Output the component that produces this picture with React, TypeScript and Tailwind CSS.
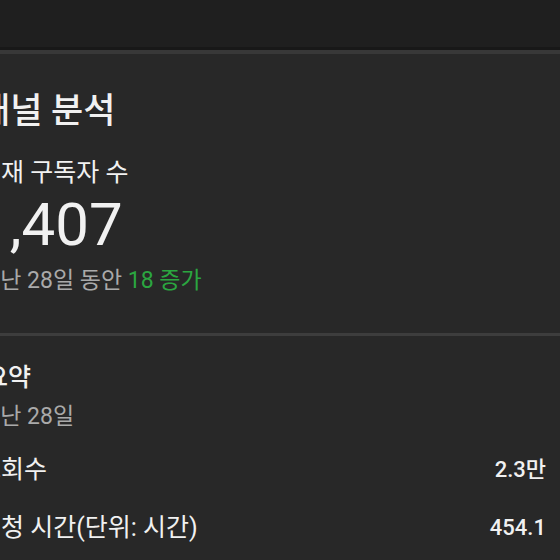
const font = { fontFamily: 'Roboto, "Noto Sans CJK KR", sans-serif' };

const Row = ({ label, value }: { label: string; value: string }) => (
  <div className="flex items-center justify-between h-[30px] text-[#f1f1f1]">
    <span className="-ml-[2px] text-[25px] leading-[30px]">{label}</span>
    <span className="font-medium text-[22px] leading-[30px]">{value}</span>
  </div>
);

export default function App() {
  return (
    <div className="w-[560px] h-[560px] overflow-hidden bg-[#282828]" style={font}>
      <div className="h-[47px] bg-[#1f1f1f]" />
      <div className="h-[3px] bg-[#181818]" />
      <div className="h-[4px] bg-[#383838]" />

      <div className="ml-[-20px] pr-[14px]">
        {/* 채널 분석 */}
        <section className="pt-[40px] pb-[38px]">
          <h1 className="-ml-[2px] text-[35px] leading-[36px] font-medium text-[#f1f1f1]">채널 분석</h1>
          <div className="mt-[29px] -ml-[2px] text-[25px] leading-[28px] text-[#f1f1f1]">현재 구독자 수</div>
          <div className="mt-[6px] -ml-[4px] text-[60px] leading-[64px] text-[#f1f1f1]">1,407</div>
          <div className="mt-[10px] -ml-[1px] text-[23px] leading-[28px] text-[#aaaaaa]">
            지난 28일 동안 <span className="text-[#2ba640]">18 증가</span>
          </div>
        </section>

        <div className="h-[3px] bg-[#3d3d3d] ml-[20px] -mr-[14px]" />

        {/* 요약 */}
        <section className="pt-[26px]">
          <h2 className="ml-[5px] text-[25px] leading-[32px] font-medium text-[#f1f1f1]">요약</h2>
          <div className="mt-[9px] -ml-[1px] text-[23px] leading-[28px] text-[#aaaaaa]">지난 28일</div>
          <div className="mt-[24px] flex flex-col gap-[28px]">
            <Row label="조회수" value="2.3만" />
            <Row label="시청 시간(단위: 시간)" value="454.1" />
          </div>
        </section>
      </div>
    </div>
  );
}
